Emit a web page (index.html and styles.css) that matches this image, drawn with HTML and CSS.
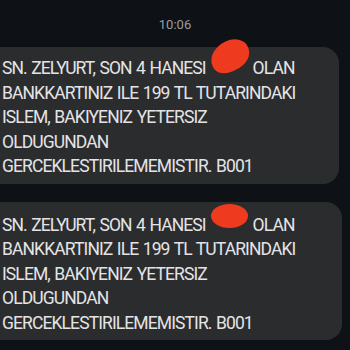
FILE: index.html
```html
<!DOCTYPE html>
<html lang="tr">
<head>
    <meta charset="UTF-8">
    <meta name="viewport" content="width=device-width, initial-scale=1.0">
    <link rel="stylesheet" href="styles.css">
    <title>Mesajlar</title>
</head>
<body>
    <div class="time">10:06</div>
    <div class="thread">
        <div class="bubble first">
            <p>SN. ZELYURT, SON 4 HANESI <span class="redact scribble"></span> OLAN<br>BANKKARTINIZ ILE 199 TL TUTARINDAKI<br>ISLEM, BAKIYENIZ YETERSIZ<br>OLDUGUNDAN<br>GERCEKLESTIRILEMEMISTIR. B001</p>
        </div>
        <div class="bubble second">
            <p>SN. ZELYURT, SON 4 HANESI <span class="redact blob"></span> OLAN<br>BANKKARTINIZ ILE 199 TL TUTARINDAKI<br>ISLEM, BAKIYENIZ YETERSIZ<br>OLDUGUNDAN<br>GERCEKLESTIRILEMEMISTIR. B001</p>
        </div>
    </div>
</body>
</html>
```

FILE: styles.css
```css
*{
    padding: 0;
    margin: 0;
    box-sizing: border-box;
}
body{
    background: #0e1115;
    font-family: Roboto, "Liberation Sans", sans-serif;
    width: 350px;
    height: 350px;
    overflow: hidden;
}
.time{
    color: #9a9ea4;
    font-size: 13px;
    text-align: center;
    padding-top: 17px;
    height: 47px;
}
.thread{
    display: flex;
    flex-direction: column;
    gap: 18px;
}
.bubble{
    background: #2b2c2e;
    border-radius: 16px;
    margin-left: -20px;
    width: 359px;
    padding: 9px 0 5px 22px;
}
.bubble.second{
    width: 362px;
    padding-top: 11px;
}
.bubble p{
    color: #e4e4e6;
    font-size: 17.5px;
    line-height: 24.5px;
    letter-spacing: -0.9px;
    word-spacing: 1px;
    white-space: nowrap;
}
.redact{
    display: inline-block;
    width: 38px;
    height: 12px;
    position: relative;
}
.redact::after{
    content: "";
    position: absolute;
    background: #ee3a1f;
}
.scribble::after{
    left: 0;
    top: -21px;
    width: 40px;
    height: 30px;
    border-radius: 55% 45% 50% 40%;
    transform: rotate(-25deg);
}
.blob::after{
    left: 1px;
    top: -15px;
    width: 37px;
    height: 24px;
    border-radius: 50%;
}
```
